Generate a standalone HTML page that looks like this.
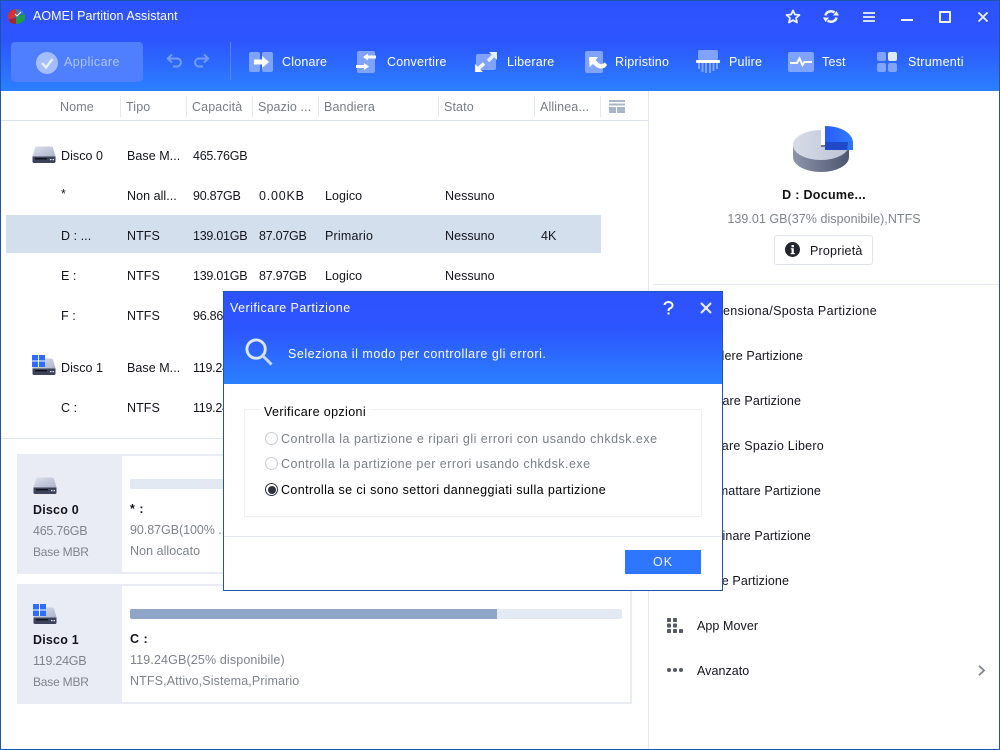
<!DOCTYPE html>
<html><head><meta charset="utf-8">
<style>
html,body{margin:0;padding:0;background:#fff}
#w{position:relative;width:1000px;height:750px;overflow:hidden;background:#fff;font-family:"Liberation Sans",sans-serif;font-size:12.5px;color:#14151c}
.a{position:absolute}
.t{position:absolute;white-space:nowrap;line-height:16px;height:16px}
.h{color:#777c86;letter-spacing:.12px}
.c{letter-spacing:.05px}
.n{letter-spacing:-.25px}
.g{color:#7f838d;letter-spacing:.1px}
.tb{color:#fff;letter-spacing:.2px;top:54px;font-size:12.5px}
.r{text-align:right;letter-spacing:.1px}
.s{position:absolute;top:96px;width:1px;height:21px;background:#e3e8f1}
svg{position:absolute;overflow:visible}
</style></head><body>
<div id="w">
<svg width="0" height="0" style="position:absolute"><defs>
<linearGradient id="dg" x1="0" y1="0" x2="1" y2="1"><stop offset="0" stop-color="#dde1ec"/><stop offset="1" stop-color="#a9b1c7"/></linearGradient>
<linearGradient id="pg" x1="0" y1="0" x2="1" y2="0"><stop offset="0" stop-color="#d8dce8"/><stop offset="1" stop-color="#bcc3d6"/></linearGradient>
<linearGradient id="pe" x1="0" y1="0" x2="1" y2="0"><stop offset="0" stop-color="#8d95ab"/><stop offset="1" stop-color="#4d566f"/></linearGradient>
<linearGradient id="pb" x1="0" y1="0" x2="1" y2="0"><stop offset="0" stop-color="#2a5cf5"/><stop offset="1" stop-color="#2f7cff"/></linearGradient>
<symbol id="disk" viewBox="0 0 24 17"><path d="M5 .5H19Q20.500 .5 21 2L23.500 10V11.500H.5V10L3 2Q3.500 .5 5 .5Z" fill="url(#dg)"/><path d="M.5 10.500H23.500V15.500Q23.500 17 22 17H2Q.5 17 .5 15.500Z" fill="#3c435a"/><rect x="3" y="12" width="12" height="1.500" fill="#12151f"/><rect x="18" y="13" width="1.500" height="1.200" fill="#dfe3ee"/><rect x="20.500" y="13" width="1.500" height="1.200" fill="#dfe3ee"/></symbol>
<symbol id="win" viewBox="0 0 13 12"><rect width="13" height="12" fill="#fff"/><rect width="6" height="5.500" fill="#2f6bff"/><rect x="7" width="6" height="5.500" fill="#2f6bff"/><rect y="6.500" width="6" height="5.500" fill="#2f6bff"/><rect x="7" y="6.500" width="6" height="5.500" fill="#2f6bff"/></symbol>
</defs></svg>

<!-- header -->
<div class="a" style="left:0;top:0;width:1000px;height:91px;background:linear-gradient(#2d52ff 0,#2d55ff 45%,#2b80ff 100%)"></div>
<svg style="left:8px;top:9px" width="18" height="16" viewBox="0 0 18 16"><path d="M0 8Q0 1 8 0L9 7L1 11Z" fill="#d8312f"/><path d="M8 0Q13 0 16 4L9 7Z" fill="#3e7fb0"/><path d="M9 7L17 5V11Q13 15 8 15V10Z" fill="#1f9b4c"/><path d="M1 10L8 9V15Q3 15 1 12Z" fill="#a8262a"/><path d="M7 5L9 7L13 3" stroke="#e8f5e8" stroke-width="1" fill="none"/></svg>
<div class="t" style="left:33px;top:8px;color:#fff;letter-spacing:.06px">AOMEI Partition Assistant</div>

<svg style="left:785px;top:9px" width="16" height="15" viewBox="0 0 16 15"><path d="M8 1.500L9.900 5.500L14.500 6L11 9L12 13.500L8 11.200L4 13.500L5 9L1.500 6L6.100 5.500Z" fill="none" stroke="#eef2ff" stroke-width="1.800" stroke-linejoin="round"/></svg>
<svg style="left:823px;top:9px" width="16" height="15" viewBox="0 0 16 15"><path d="M2.500 6.500A5.500 5 0 0 1 11.500 3.500" fill="none" stroke="#eef2ff" stroke-width="2.500"/><path d="M13.500 8.500A5.500 5 0 0 1 4.500 11.500" fill="none" stroke="#eef2ff" stroke-width="2.500"/><path d="M10 6.500H16L13.500 2Z" fill="#eef2ff"/><path d="M6 8.500H0L2.500 13Z" fill="#eef2ff"/></svg>
<svg style="left:863px;top:12px" width="12" height="10" viewBox="0 0 12 10"><path d="M0 1H12M0 5H12M0 9H12" stroke="#eef2ff" stroke-width="1.800"/></svg>
<div class="a" style="left:901px;top:19px;width:12px;height:2px;background:#eef2ff"></div>
<div class="a" style="left:939px;top:11px;width:8px;height:8px;border:2px solid #eef2ff;border-radius:1px"></div>
<svg style="left:978px;top:12px" width="10" height="10" viewBox="0 0 10 10"><path d="M.5.5L9.500 9.500M9.500.5L.5 9.500" stroke="#eef2ff" stroke-width="1.800"/></svg>

<div class="a" style="left:11px;top:42px;width:132px;height:40px;background:#4f7fff;border-radius:4px"></div>
<svg style="left:36px;top:52px" width="22" height="22" viewBox="0 0 22 22"><circle cx="11" cy="11" r="11" fill="#a3bdff"/><path d="M6 11L10 15.500L16.500 7" fill="none" stroke="#eaf0ff" stroke-width="2.400"/></svg>
<div class="t tb" style="left:64px;color:#adc5ff;letter-spacing:.42px">Applicare</div>
<svg style="left:167px;top:54px" width="16" height="14" viewBox="0 0 16 14"><path d="M1 4.500H10A4 4 0 0 1 10 12.500H6" fill="none" stroke="#719bff" stroke-width="2"/><path d="M5 .5L.8 4.500L5 8.500" fill="none" stroke="#719bff" stroke-width="2"/></svg>
<svg style="left:193px;top:54px" width="16" height="14" viewBox="0 0 16 14"><path d="M15 4.500H6A4 4 0 0 0 6 12.500H10" fill="none" stroke="#719bff" stroke-width="2"/><path d="M11 .5L15.200 4.500L11 8.500" fill="none" stroke="#719bff" stroke-width="2"/></svg>
<div class="a" style="left:230px;top:42px;width:1px;height:38px;background:#5a83ff"></div>

<!-- Clonare -->
<svg style="left:249px;top:52px" width="24" height="20" viewBox="0 0 24 20"><rect width="11" height="20" rx="2" fill="#7fa3ff"/><rect x="13" width="11" height="20" rx="2" fill="#7fa3ff"/><path d="M5 7.500H13V4L20 10L13 16V12.500H5Z" fill="#fff"/></svg>
<div class="t tb" style="left:282px">Clonare</div>
<!-- Convertire -->
<svg style="left:356px;top:51px" width="21" height="22" viewBox="0 0 21 22"><rect x="1" width="18" height="22" rx="2" fill="#7fa3ff"/><path d="M7 6L12 2.500V4.500H20V7.500H12V9.500Z" fill="#fff"/><path d="M13 15.500L8 12V14H0V17H8V19Z" fill="#fff"/></svg>
<div class="t tb" style="left:387px">Convertire</div>
<!-- Liberare -->
<svg style="left:475px;top:51px" width="22" height="22" viewBox="0 0 22 22"><rect x="1" y="3" width="20" height="16" rx="2" fill="#7fa3ff"/><path d="M14 1H22V9Z" fill="#e8eeff"/><path d="M18 5L13 10" stroke="#e8eeff" stroke-width="3.500"/><path d="M0 21V13L8 21Z" fill="#fff"/><path d="M4 17L9 12.500" stroke="#fff" stroke-width="3.500"/></svg>
<div class="t tb" style="left:507px">Liberare</div>
<!-- Ripristino -->
<svg style="left:585px;top:51px" width="22" height="22" viewBox="0 0 22 22"><rect width="18" height="22" rx="2" fill="#7fa3ff"/><path d="M4 6H13L10.500 9L14 12.500Q17 14 20 11.500L22 14Q20 18 15 17.500Q12 17 8 13L4.500 16Z" fill="#fff"/></svg>
<div class="t tb" style="left:615px">Ripristino</div>
<!-- Pulire -->
<svg style="left:696px;top:50px" width="24" height="23" viewBox="0 0 24 23"><rect x="2" width="20" height="10" rx="2" fill="#7fa3ff"/><rect y="10" width="24" height="3" rx="1" fill="#fff"/><path d="M2 13h2v6H2zM5.500 13h2v9h-2zM9 13h2v10H9zM13 13h2v10h-2zM16.500 13h2v8h-2zM20 13h2v6h-2z" fill="#7fa3ff"/></svg>
<div class="t tb" style="left:729px">Pulire</div>
<!-- Test -->
<svg style="left:788px;top:52px" width="26" height="20" viewBox="0 0 26 20"><rect width="26" height="20" rx="2" fill="#7fa3ff"/><path d="M2 11H9L11.500 6.500L14.500 13L16.500 10H24" fill="none" stroke="#fff" stroke-width="2"/></svg>
<div class="t tb" style="left:822px">Test</div>
<!-- Strumenti -->
<svg style="left:877px;top:52px" width="20" height="20" viewBox="0 0 20 20"><rect width="9" height="9" rx="2" fill="#7fa3ff"/><rect x="11" width="9" height="9" rx="2" fill="#dfe8ff"/><rect y="11" width="9" height="9" rx="2" fill="#7fa3ff"/><rect x="11" y="11" width="9" height="9" rx="2" fill="#7fa3ff"/></svg>
<div class="t tb" style="left:908px;letter-spacing:.25px">Strumenti</div>

<!-- table header -->
<div class="t h" style="left:60px;top:99px">Nome</div>
<div class="s" style="left:120px"></div><div class="t h" style="left:126px;top:99px">Tipo</div>
<div class="s" style="left:186px"></div><div class="t h" style="left:192px;top:99px">Capacità</div>
<div class="s" style="left:252px"></div><div class="t h" style="left:258px;top:99px">Spazio ...</div>
<div class="s" style="left:318px"></div><div class="t h" style="left:324px;top:99px">Bandiera</div>
<div class="s" style="left:438px"></div><div class="t h" style="left:444px;top:99px">Stato</div>
<div class="s" style="left:534px"></div><div class="t h" style="left:540px;top:99px">Allinea...</div>
<div class="s" style="left:600px"></div>
<svg style="left:609px;top:100px" width="16" height="13" viewBox="0 0 16 13"><rect width="16" height="2" fill="#a9b5c8"/><rect y="3.500" width="16" height="2" fill="#a9b5c8"/><rect y="7" width="7" height="6" fill="#a9b5c8"/><rect x="8" y="7" width="8" height="6" fill="#a9b5c8"/></svg>
<div class="a" style="left:0;top:120px;width:648px;height:1px;background:#dbe2ee"></div>
<div class="a" style="left:648px;top:91px;width:1px;height:659px;background:#e1e6f1"></div>

<!-- rows -->
<div class="a" style="left:6px;top:215px;width:595px;height:38px;background:#d4dfee"></div>
<svg style="left:32px;top:146px" width="24" height="17"><use href="#disk"/></svg>
<div class="t c" style="left:61px;top:148px">Disco 0</div><div class="t c" style="left:127px;top:148px">Base M...</div><div class="t n" style="left:193px;top:148px">465.76GB</div>

<div class="t c" style="left:61px;top:186px">*</div><div class="t c" style="left:127px;top:188px">Non all...</div><div class="t n" style="left:193px;top:188px">90.87GB</div><div class="t n" style="left:259px;top:188px;letter-spacing:.8px">0.00KB</div><div class="t c" style="left:325px;top:188px">Logico</div><div class="t c" style="left:445px;top:188px">Nessuno</div>

<div class="t c" style="left:61px;top:228px">D : ...</div><div class="t c" style="left:127px;top:228px">NTFS</div><div class="t n" style="left:193px;top:228px">139.01GB</div><div class="t n" style="left:259px;top:228px">87.07GB</div><div class="t c" style="left:325px;top:228px;letter-spacing:.2px">Primario</div><div class="t c" style="left:445px;top:228px">Nessuno</div><div class="t c" style="left:541px;top:228px">4K</div>

<div class="t c" style="left:61px;top:268px">E :</div><div class="t c" style="left:127px;top:268px">NTFS</div><div class="t n" style="left:193px;top:268px">139.01GB</div><div class="t n" style="left:259px;top:268px">87.97GB</div><div class="t c" style="left:325px;top:268px">Logico</div><div class="t c" style="left:445px;top:268px">Nessuno</div>

<div class="t c" style="left:61px;top:308px">F :</div><div class="t c" style="left:127px;top:308px">NTFS</div><div class="t n" style="left:193px;top:308px">96.86GB</div>

<svg style="left:32px;top:358px" width="24" height="17"><use href="#disk"/></svg>
<svg style="left:32px;top:355px" width="13" height="12"><use href="#win"/></svg>
<div class="t c" style="left:61px;top:360px">Disco 1</div><div class="t c" style="left:127px;top:360px">Base M...</div><div class="t n" style="left:193px;top:360px">119.24GB</div>

<div class="t c" style="left:61px;top:400px">C :</div><div class="t c" style="left:127px;top:400px">NTFS</div><div class="t n" style="left:193px;top:400px">119.24GB</div>

<div class="a" style="left:0;top:438px;width:648px;height:1px;background:#dfe4ee"></div>

<!-- cards -->
<div class="a" style="left:17px;top:454px;width:615px;height:120px;background:#e9ecf4"></div>
<div class="a" style="left:122px;top:456px;width:508px;height:116px;background:#fff"></div>
<div class="a" style="left:130px;top:479px;width:492px;height:10px;background:#e3e9f3;border-radius:2px"></div>
<svg style="left:33px;top:477px" width="24" height="17"><use href="#disk"/></svg>
<div class="t" style="left:33px;top:502px;font-weight:bold;letter-spacing:.2px">Disco 0</div>
<div class="t g" style="left:33px;top:523px;letter-spacing:-.25px">465.76GB</div>
<div class="t g" style="left:33px;top:544px;font-size:12px;letter-spacing:-.2px">Base MBR</div>
<div class="t" style="left:130px;top:501px;font-weight:bold;letter-spacing:.5px">* :</div>
<div class="t g" style="left:130px;top:522px;letter-spacing:-.05px">90.87GB(100% ...</div>
<div class="t g" style="left:130px;top:543px;letter-spacing:.05px">Non allocato</div>

<div class="a" style="left:17px;top:584px;width:615px;height:120px;background:#e9ecf4"></div>
<div class="a" style="left:122px;top:586px;width:508px;height:116px;background:#fff"></div>
<div class="a" style="left:130px;top:609px;width:492px;height:10px;background:#e3e9f3;border-radius:2px"></div>
<div class="a" style="left:130px;top:609px;width:367px;height:10px;background:#8fa6c8;border-radius:2px 0 0 2px"></div>
<svg style="left:33px;top:607px" width="24" height="17"><use href="#disk"/></svg>
<svg style="left:33px;top:604px" width="13" height="12"><use href="#win"/></svg>
<div class="t" style="left:33px;top:632px;font-weight:bold;letter-spacing:.2px">Disco 1</div>
<div class="t g" style="left:33px;top:653px;letter-spacing:-.25px">119.24GB</div>
<div class="t g" style="left:33px;top:674px;font-size:12px;letter-spacing:-.2px">Base MBR</div>
<div class="t" style="left:130px;top:631px;font-weight:bold;letter-spacing:.5px">C :</div>
<div class="t g" style="left:130px;top:652px;letter-spacing:.14px">119.24GB(25% disponibile)</div>
<div class="t g" style="left:130px;top:673px;letter-spacing:.12px">NTFS,Attivo,Sistema,Primario</div>

<!-- right panel -->
<svg style="left:792px;top:125px" width="62" height="48" viewBox="0 0 62 48">
<path d="M1 20V32A28 15 0 0 0 57 32V20Z" fill="url(#pe)"/>
<path d="M29 5A28 15 0 1 0 57 20L56 22H29Z" fill="url(#pg)"/>
<path d="M33 1C47 1 60 7 61 17H33Z" fill="url(#pb)"/>
<path d="M33 17H61V25H33Z" fill="#1f49c8"/>
<path d="M56 17H61V25H55Z" fill="#2b74f5"/>
</svg>
<div class="t" style="left:724px;width:200px;text-align:center;top:187px;font-weight:bold;color:#111;letter-spacing:.3px">D : Docume...</div>
<div class="t g" style="left:724px;width:200px;text-align:center;top:211px;letter-spacing:.05px">139.01 GB(37% disponibile),NTFS</div>
<div class="a" style="left:774px;top:235px;width:97px;height:28px;border:1px solid #dfe3ec;border-radius:3px;background:#fff"></div>
<svg style="left:785px;top:242px" width="15" height="15" viewBox="0 0 15 15"><circle cx="7.500" cy="7.500" r="7.500" fill="#23252e"/><path d="M5.800 6.200H8.800V11H9.800V12.200H5.600V11H6.600V7.400H5.800Z" fill="#fff"/><rect x="6.500" y="3" width="2.400" height="2.200" fill="#fff"/></svg>
<div class="t" style="left:810px;top:243px;letter-spacing:.2px">Proprietà</div>
<div class="a" style="left:653px;top:284px;width:347px;height:1px;background:#e3e8f2"></div>

<div class="t r" style="right:123px;top:303px;letter-spacing:.35px">Ridimensiona/Sposta Partizione</div>
<div class="t r" style="right:197px;top:348px">Dividere Partizione</div>
<div class="t r" style="right:199px;top:393px">Creare Partizione</div>
<div class="t r" style="right:176px;top:438px;letter-spacing:.25px">Aumentare Spazio Libero</div>
<div class="t r" style="right:179px;top:483px">Formattare Partizione</div>
<div class="t r" style="right:189px;top:528px">Eliminare Partizione</div>
<div class="t r" style="right:211px;top:573px">Unire Partizione</div>

<svg style="left:667px;top:618px" width="16" height="15" viewBox="0 0 16 15" fill="#555a66"><rect width="4" height="4" rx=".8"/><rect x="6" width="4" height="4" rx=".8"/><rect y="5.500" width="4" height="4" rx=".8"/><rect x="6" y="5.500" width="4" height="4" rx=".8"/><rect y="11" width="4" height="4" rx=".8"/><rect x="6" y="11" width="4" height="4" rx=".8"/><rect x="12" y="11" width="4" height="4" rx=".8"/></svg>
<div class="t" style="left:697px;top:618px;letter-spacing:.07px">App Mover</div>
<svg style="left:667px;top:668px" width="16" height="4" viewBox="0 0 16 4" fill="#555a66"><circle cx="2" cy="2" r="2"/><circle cx="8" cy="2" r="2"/><circle cx="14" cy="2" r="2"/></svg>
<div class="t" style="left:697px;top:663px;letter-spacing:.05px">Avanzato</div>
<svg style="left:978px;top:665px" width="8" height="11" viewBox="0 0 8 11"><path d="M1 .8L6 5.500L1 10.200" fill="none" stroke="#80858f" stroke-width="1.800"/></svg>

<!-- dialog -->
<div class="a" style="left:223px;top:291px;width:498px;height:298px;border:1px solid #1c56b5;background:#fff">
<div class="a" style="left:0;top:0;width:498px;height:92px;background:linear-gradient(#2d52ff 0,#2d55ff 40%,#2b80ff 100%)"></div>
</div>
<div class="t" style="left:230px;top:300px;color:#fff;letter-spacing:.45px">Verificare Partizione</div>
<svg style="left:663px;top:301px" width="11" height="15" viewBox="0 0 11 15"><path d="M1.500 4A4 3.300 0 1 1 7 7.300Q5.500 8.100 5.500 10" fill="none" stroke="#fff" stroke-width="2"/><rect x="4.500" y="11.500" width="2" height="2" fill="#fff"/></svg>
<svg style="left:701px;top:303px" width="10" height="10" viewBox="0 0 10 10"><path d="M0 0L10 10M10 0L0 10" stroke="#eef2ff" stroke-width="2"/></svg>
<svg style="left:245px;top:338px" width="28" height="28" viewBox="0 0 29 29"><circle cx="11.500" cy="11.500" r="9.500" fill="none" stroke="#dbe6ff" stroke-width="3"/><path d="M18 18L27.500 27.500" stroke="#c5d6ff" stroke-width="3"/></svg>
<div class="t" style="left:288px;top:346px;color:#fff;letter-spacing:.54px">Seleziona il modo per controllare gli errori.</div>

<div class="a" style="left:244px;top:409px;width:456px;height:106px;border:1px solid #eff1f5"></div>
<div class="t" style="left:260px;top:404px;padding:0 4px;background:#fff;color:#000;letter-spacing:.38px">Verificare opzioni</div>
<div class="a" style="left:265px;top:432px;width:11px;height:11px;border:1px solid #c9ccd2;border-radius:50%"></div>
<div class="t" style="left:281px;top:431px;color:#7b7f88;letter-spacing:.48px">Controlla la partizione e ripari gli errori con usando chkdsk.exe</div>
<div class="a" style="left:265px;top:457px;width:11px;height:11px;border:1px solid #c9ccd2;border-radius:50%"></div>
<div class="t" style="left:281px;top:456px;color:#7b7f88;letter-spacing:.46px">Controlla la partizione per errori usando chkdsk.exe</div>
<div class="a" style="left:265px;top:483px;width:11px;height:11px;border:1px solid #30333c;border-radius:50%;background:#fff"><div style="position:absolute;left:1.500px;top:1.500px;width:8px;height:8px;border-radius:50%;background:#30333c"></div></div>
<div class="t" style="left:281px;top:482px;color:#000;letter-spacing:.4px">Controlla se ci sono settori danneggiati sulla partizione</div>

<div class="a" style="left:224px;top:536px;width:498px;height:1px;background:#e4e8f1"></div>
<div class="a" style="left:625px;top:550px;width:76px;height:24px;background:#2f76ff;color:#e6eeff;text-align:center;line-height:25px;letter-spacing:1px">OK</div>

<!-- window border -->
<div class="a" style="left:0;top:0;width:998px;height:748px;border:1px solid #1c56a8;pointer-events:none"></div>
</div>
</body></html>
